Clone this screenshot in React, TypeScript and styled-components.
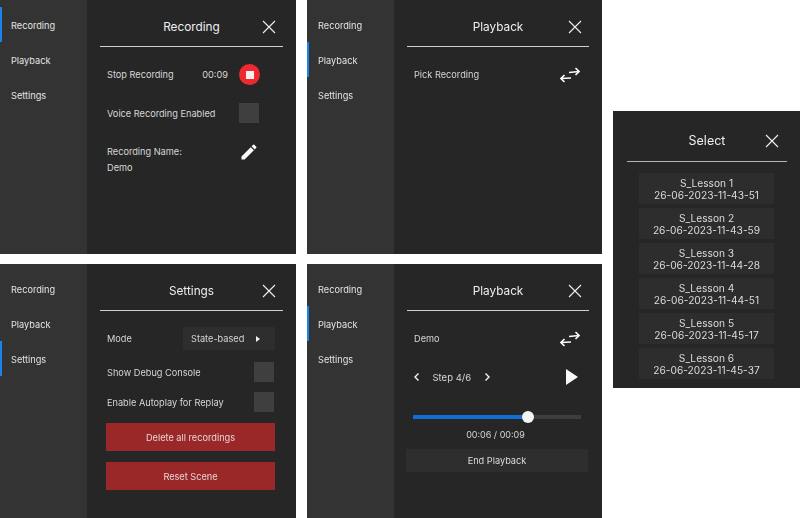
import React from 'react';
import styled, { createGlobalStyle } from 'styled-components';
import { MdEdit } from 'react-icons/md';

const GlobalStyle = createGlobalStyle`
  html, body {
    margin: 0;
    padding: 0;
    background: #fff;
  }
  * {
    box-sizing: border-box;
  }
`;

const Page = styled.div`
  width: 800px;
  height: 518px;
  overflow: hidden;
  display: grid;
  grid-template-columns: 296px 295px 187px;
  grid-template-rows: 254px 254px;
  column-gap: 11px;
  row-gap: 10px;
  font-family: Inter, "Liberation Sans", sans-serif;
  filter: blur(0.3px);
`;

const Panel = styled.div`
  display: flex;
  background: #262626;
  overflow: hidden;
`;

const Sidebar = styled.nav`
  width: 87px;
  flex-shrink: 0;
  padding-top: 7px;
  background: #333333;
`;

const NavItem = styled.div<{ $active?: boolean }>`
  height: 35px;
  display: flex;
  align-items: center;
  padding: 1px 0 0 9px;
  border-left: 2px solid ${({ $active }) => ($active ? '#1a82e8' : 'transparent')};
  font-size: 9.2px;
  color: #e4e4e4;
`;

const Main = styled.div`
  flex: 1;
  min-width: 0;
  padding: 0 13px;
`;

const Header = styled.header`
  height: 47px;
  position: relative;
  display: flex;
  align-items: center;
  justify-content: center;
  padding-top: 7px;
  border-bottom: 1px solid #d0d0d0;
  font-size: 11.8px;
  color: #eeeeee;
`;

const CloseIcon = styled.svg`
  position: absolute;
  right: 7px;
  top: 20px;
  width: 14px;
  height: 14px;
`;

const Close = () => (
  <CloseIcon viewBox="0 0 14 14" fill="none" stroke="#f0f0f0" strokeWidth="1.1">
    <path d="M1 1 L13 13 M13 1 L1 13" />
  </CloseIcon>
);

const Body = styled.div`
  padding: 0 7px;
  display: flex;
  flex-direction: column;
`;

const SettingsBody = styled(Body)`
  padding-top: 16px;
`;

const Row = styled.div<{ $height: number }>`
  height: ${({ $height }) => $height}px;
  flex-shrink: 0;
  display: flex;
  align-items: center;
  justify-content: space-between;
  font-size: 9.2px;
  color: #d6d6d6;
`;

const ModeRow = styled(Row)`
  margin-bottom: 7px;
`;

const Group = styled.div`
  display: flex;
  align-items: center;
`;

const Timer = styled.span`
  margin-right: 11px;
`;

const StopButton = styled.div`
  width: 21px;
  height: 21px;
  margin-right: 16px;
  border-radius: 50%;
  background: #ee2a2e;
  display: flex;
  align-items: center;
  justify-content: center;
`;

const StopSquare = styled.div`
  width: 8px;
  height: 8px;
  background: #f4f0f0;
`;

const Toggle = styled.div<{ $inset: number }>`
  width: 20px;
  height: 20px;
  margin-right: ${({ $inset }) => $inset}px;
  background: #3f3f3f;
`;

const NameBlock = styled.div`
  display: flex;
  flex-direction: column;
  gap: 5px;
  line-height: 11px;
`;

const NameRow = styled(Row)`
  align-items: flex-start;
  padding-top: 22px;
`;

const EditIcon = styled(MdEdit)`
  width: 20px;
  height: 20px;
  margin-right: 17px;
  margin-top: -4px;
  color: #fafafa;
`;

const SwapSvg = styled.svg`
  width: 20px;
  height: 16px;
  margin-right: 2px;
`;

const SwapIcon = () => (
  <SwapSvg viewBox="0 0 20 16" fill="none" stroke="#fafafa" strokeWidth="1.6">
    <path d="M9 5.5 L19 4.5 M15.5 1 L19 4.5 L15.5 8" />
    <path d="M11 11 L1 11.5 M4.5 8 L1 11.5 L4.5 15" />
  </SwapSvg>
);

const Dropdown = styled.div`
  width: 92px;
  height: 23px;
  margin-right: 1px;
  padding-left: 8px;
  display: flex;
  align-items: center;
  background: #2e2e2e;
`;

const Caret = styled.span`
  margin-left: 12px;
  width: 0;
  height: 0;
  border-left: 4px solid #f0f0f0;
  border-top: 3.5px solid transparent;
  border-bottom: 3.5px solid transparent;
`;

const DangerButton = styled.div`
  width: 169px;
  height: 28px;
  flex-shrink: 0;
  margin: 6px 0 5px -1px;
  display: flex;
  align-items: center;
  justify-content: center;
  background: #9b2828;
  font-size: 9.2px;
  color: #e4d6d6;
`;

const StepGroup = styled(Group)`
  font-size: 9.5px;
`;

const StepLabel = styled.span`
  margin: 0 13.5px;
`;

const Chevron = styled.svg`
  width: 5px;
  height: 8px;
`;

const Left = () => (
  <Chevron viewBox="0 0 5 8" fill="none" stroke="#f4f4f4" strokeWidth="1.4">
    <path d="M4.5 0.5 L1 4 L4.5 7.5" />
  </Chevron>
);

const Right = () => (
  <Chevron viewBox="0 0 5 8" fill="none" stroke="#f4f4f4" strokeWidth="1.4">
    <path d="M0.5 0.5 L4 4 L0.5 7.5" />
  </Chevron>
);

const PlayIcon = styled.svg`
  width: 12px;
  height: 16px;
  margin-right: 4px;
`;

const Slider = styled.div`
  position: relative;
  height: 4px;
  margin: 27px 1px 0 -1px;
  background: #3e3e3e;
`;

const SliderFill = styled.div`
  height: 100%;
  background: #0f6fd6;
`;

const SliderThumb = styled.div`
  position: absolute;
  top: -4px;
  width: 12px;
  height: 12px;
  margin-left: -6px;
  border-radius: 50%;
  background: #f4f4f4;
`;

const TimeLabel = styled.div`
  margin: 10px 5px 0 0;
  text-align: center;
  font-size: 9px;
  color: #d6d6d6;
`;

const EndButton = styled.div`
  height: 23px;
  margin: 9px -6px 0 -8px;
  display: flex;
  align-items: center;
  justify-content: center;
  background: #2e2e2e;
  font-size: 9.2px;
  color: #dcdcdc;
`;

const SelectPanel = styled.div`
  grid-column: 3;
  grid-row: 1 / 3;
  align-self: start;
  margin-top: 111px;
  height: 277px;
  padding: 0 13px 0 14px;
  background: #262626;
`;

const SelectHeader = styled(Header)`
  height: 51px;
  padding-top: 9px;
  font-size: 12.5px;
  border-bottom-color: #b4b4b4;

  ${CloseIcon} {
    right: 8px;
    top: 23px;
  }
`;

const SelectList = styled.div`
  height: 211px;
  margin: 11px 13px 0 12px;
  overflow: hidden;
  display: flex;
  flex-direction: column;
  gap: 4px;
`;

const SelectItem = styled.div`
  flex-shrink: 0;
  height: 31px;
  display: flex;
  flex-direction: column;
  align-items: center;
  justify-content: center;
  background: #2d2d2d;
  font-size: 10.2px;
  line-height: 12px;
  color: #dcdcdc;
`;

const navItems = ['Recording', 'Playback', 'Settings'];

const lessons = [
  ['S_Lesson 1', '26-06-2023-11-43-51'],
  ['S_Lesson 2', '26-06-2023-11-43-59'],
  ['S_Lesson 3', '26-06-2023-11-44-28'],
  ['S_Lesson 4', '26-06-2023-11-44-51'],
  ['S_Lesson 5', '26-06-2023-11-45-17'],
  ['S_Lesson 6', '26-06-2023-11-45-37'],
];

const Shell: React.FC<{ active: string; title: string; children: React.ReactNode }> = ({ active, title, children }) => (
  <Panel>
    <Sidebar>
      {navItems.map((item) => (
        <NavItem key={item} $active={item === active}>{item}</NavItem>
      ))}
    </Sidebar>
    <Main>
      <Header>
        {title}
        <Close />
      </Header>
      {children}
    </Main>
  </Panel>
);

const App: React.FC = () => (
  <Page>
    <GlobalStyle />
    <Shell active="Recording" title="Recording">
      <Body>
        <Row $height={55}>
          Stop Recording
          <Group>
            <Timer>00:09</Timer>
            <StopButton><StopSquare /></StopButton>
          </Group>
        </Row>
        <Row $height={22}>
          Voice Recording Enabled
          <Toggle $inset={17} />
        </Row>
        <NameRow $height={60}>
          <NameBlock>
            <span>Recording Name:</span>
            <span>Demo</span>
          </NameBlock>
          <EditIcon />
        </NameRow>
      </Body>
    </Shell>

    <Shell active="Playback" title="Playback">
      <Body>
        <Row $height={55}>
          Pick Recording
          <SwapIcon />
        </Row>
      </Body>
    </Shell>

    <SelectPanel>
      <SelectHeader>
        Select
        <Close />
      </SelectHeader>
      <SelectList>
        {lessons.map(([name, stamp]) => (
          <SelectItem key={name}>
            <span>{name}</span>
            <span>{stamp}</span>
          </SelectItem>
        ))}
      </SelectList>
    </SelectPanel>

    <Shell active="Settings" title="Settings">
      <SettingsBody>
        <ModeRow $height={23}>
          Mode
          <Dropdown>
            State-based
            <Caret />
          </Dropdown>
        </ModeRow>
        <Row $height={30}>
          Show Debug Console
          <Toggle $inset={2} />
        </Row>
        <Row $height={30}>
          Enable Autoplay for Replay
          <Toggle $inset={2} />
        </Row>
        <DangerButton>Delete all recordings</DangerButton>
        <DangerButton>Reset Scene</DangerButton>
      </SettingsBody>
    </Shell>

    <Shell active="Playback" title="Playback">
      <Body>
        <Row $height={55}>
          Demo
          <SwapIcon />
        </Row>
        <Row $height={22}>
          <StepGroup>
            <Left />
            <StepLabel>Step 4/6</StepLabel>
            <Right />
          </StepGroup>
          <PlayIcon viewBox="0 0 12 16" fill="#f8f8f8">
            <path d="M0 0 L12 8 L0 16 Z" />
          </PlayIcon>
        </Row>
        <Slider>
          <SliderFill style={{ width: '67%' }} />
          <SliderThumb style={{ left: '68.6%' }} />
        </Slider>
        <TimeLabel>00:06 / 00:09</TimeLabel>
        <EndButton>End Playback</EndButton>
      </Body>
    </Shell>
  </Page>
);

export default App;
